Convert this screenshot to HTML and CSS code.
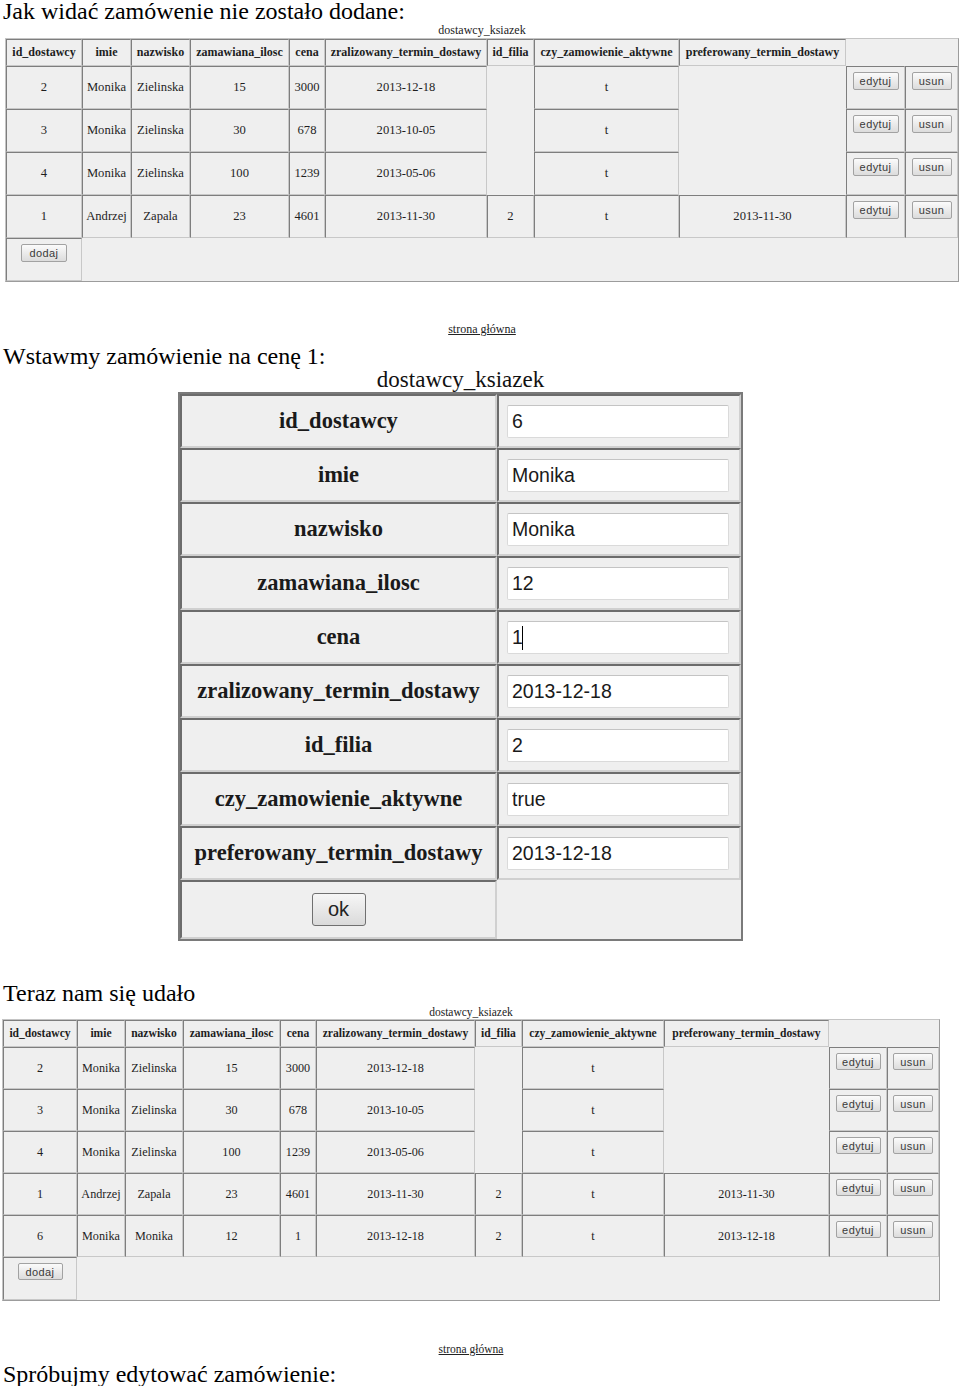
FILE: index.html
```html
<!DOCTYPE html>
<html lang="pl">
<head>
    <meta charset="UTF-8">
    <meta name="viewport" content="width=device-width, initial-scale=1.0">
    <title>dostawcy_ksiazek</title>
    <link rel="stylesheet" href="styles.css">
</head>
<body>

    <p class="doc-line">Jak widać zamówenie nie zostało dodane:</p>

    <div class="shot shot-one">
        <table class="grid grid-one">
            <caption>dostawcy_ksiazek</caption>
            <colgroup>
                <col><col><col><col><col><col><col><col><col><col><col>
            </colgroup>
            <tr class="head">
                <th>id_dostawcy</th>
                <th>imie</th>
                <th>nazwisko</th>
                <th>zamawiana_ilosc</th>
                <th>cena</th>
                <th>zralizowany_termin_dostawy</th>
                <th>id_filia</th>
                <th>czy_zamowienie_aktywne</th>
                <th>preferowany_termin_dostawy</th>
            </tr>
            <tr>
                <td>2</td><td>Monika</td><td>Zielinska</td><td>15</td><td>3000</td><td>2013-12-18</td>
                <td></td><td>t</td><td></td>
                <td class="act"><button class="btn btn-edit">edytuj</button></td>
                <td class="act"><button class="btn btn-del">usun</button></td>
            </tr>
            <tr>
                <td>3</td><td>Monika</td><td>Zielinska</td><td>30</td><td>678</td><td>2013-10-05</td>
                <td></td><td>t</td><td></td>
                <td class="act"><button class="btn btn-edit">edytuj</button></td>
                <td class="act"><button class="btn btn-del">usun</button></td>
            </tr>
            <tr>
                <td>4</td><td>Monika</td><td>Zielinska</td><td>100</td><td>1239</td><td>2013-05-06</td>
                <td></td><td>t</td><td></td>
                <td class="act"><button class="btn btn-edit">edytuj</button></td>
                <td class="act"><button class="btn btn-del">usun</button></td>
            </tr>
            <tr>
                <td>1</td><td>Andrzej</td><td>Zapala</td><td>23</td><td>4601</td><td>2013-11-30</td>
                <td>2</td><td>t</td><td>2013-11-30</td>
                <td class="act"><button class="btn btn-edit">edytuj</button></td>
                <td class="act"><button class="btn btn-del">usun</button></td>
            </tr>
            <tr class="foot">
                <td class="act"><button class="btn btn-add">dodaj</button></td>
            </tr>
        </table>
        <a class="home" href="#">strona główna</a>
    </div>

    <p class="doc-line after-link">Wstawmy zamówienie na cenę 1:</p>

    <table class="entry">
        <caption>dostawcy_ksiazek</caption>
        <tr>
            <td class="label">id_dostawcy</td>
            <td><input class="field" type="text" value="6"></td>
        </tr>
        <tr>
            <td class="label">imie</td>
            <td><input class="field" type="text" value="Monika"></td>
        </tr>
        <tr>
            <td class="label">nazwisko</td>
            <td><input class="field" type="text" value="Monika"></td>
        </tr>
        <tr>
            <td class="label">zamawiana_ilosc</td>
            <td><input class="field" type="text" value="12"></td>
        </tr>
        <tr>
            <td class="label">cena</td>
            <td>
                <div class="field-wrap">
                    <input class="field" type="text" value="1">
                    <span class="caret"></span>
                </div>
            </td>
        </tr>
        <tr>
            <td class="label">zralizowany_termin_dostawy</td>
            <td><input class="field" type="text" value="2013-12-18"></td>
        </tr>
        <tr>
            <td class="label">id_filia</td>
            <td><input class="field" type="text" value="2"></td>
        </tr>
        <tr>
            <td class="label">czy_zamowienie_aktywne</td>
            <td><input class="field" type="text" value="true"></td>
        </tr>
        <tr>
            <td class="label">preferowany_termin_dostawy</td>
            <td><input class="field" type="text" value="2013-12-18"></td>
        </tr>
        <tr class="submit-row">
            <td class="submit"><button class="ok-btn">ok</button></td>
            <td></td>
        </tr>
    </table>

    <p class="doc-line after-form">Teraz nam się udało</p>

    <div class="shot shot-two">
        <table class="grid grid-two">
            <caption>dostawcy_ksiazek</caption>
            <colgroup>
                <col><col><col><col><col><col><col><col><col><col><col>
            </colgroup>
            <tr class="head">
                <th>id_dostawcy</th>
                <th>imie</th>
                <th>nazwisko</th>
                <th>zamawiana_ilosc</th>
                <th>cena</th>
                <th>zralizowany_termin_dostawy</th>
                <th>id_filia</th>
                <th>czy_zamowienie_aktywne</th>
                <th>preferowany_termin_dostawy</th>
            </tr>
            <tr>
                <td>2</td><td>Monika</td><td>Zielinska</td><td>15</td><td>3000</td><td>2013-12-18</td>
                <td></td><td>t</td><td></td>
                <td class="act"><button class="btn btn-edit">edytuj</button></td>
                <td class="act"><button class="btn btn-del">usun</button></td>
            </tr>
            <tr>
                <td>3</td><td>Monika</td><td>Zielinska</td><td>30</td><td>678</td><td>2013-10-05</td>
                <td></td><td>t</td><td></td>
                <td class="act"><button class="btn btn-edit">edytuj</button></td>
                <td class="act"><button class="btn btn-del">usun</button></td>
            </tr>
            <tr>
                <td>4</td><td>Monika</td><td>Zielinska</td><td>100</td><td>1239</td><td>2013-05-06</td>
                <td></td><td>t</td><td></td>
                <td class="act"><button class="btn btn-edit">edytuj</button></td>
                <td class="act"><button class="btn btn-del">usun</button></td>
            </tr>
            <tr>
                <td>1</td><td>Andrzej</td><td>Zapala</td><td>23</td><td>4601</td><td>2013-11-30</td>
                <td>2</td><td>t</td><td>2013-11-30</td>
                <td class="act"><button class="btn btn-edit">edytuj</button></td>
                <td class="act"><button class="btn btn-del">usun</button></td>
            </tr>
            <tr>
                <td>6</td><td>Monika</td><td>Monika</td><td>12</td><td>1</td><td>2013-12-18</td>
                <td>2</td><td>t</td><td>2013-12-18</td>
                <td class="act"><button class="btn btn-edit">edytuj</button></td>
                <td class="act"><button class="btn btn-del">usun</button></td>
            </tr>
            <tr class="foot">
                <td class="act"><button class="btn btn-add">dodaj</button></td>
            </tr>
        </table>
        <a class="home" href="#">strona główna</a>
    </div>

    <p class="doc-line after-link-two">Spróbujmy edytować zamówienie:</p>

</body>
</html>
```

FILE: styles.css
```css
* {
    box-sizing: border-box;
}

body {
    margin: 0;
    background: #fff;
    color: #000;
    font-family: "Liberation Serif", "Times New Roman", serif;
}

/* document text between screenshots */
.doc-line {
    margin: 0;
    padding-left: 3px;
    font-size: 24px;
    line-height: 23px;
}

.after-link {
    margin-top: 9px;
}

.after-form {
    margin-top: 41px;
}

.after-link-two {
    margin-top: 7px;
}

/* list screenshots */
.shot-one {
    margin-left: 5px;
    width: 954px;
}

.shot-two {
    margin-left: 2px;
    width: 938px;
}

.home {
    display: block;
    margin-top: 40px;
    text-align: center;
    font-size: 12px;
    line-height: 14px;
    color: #222;
    text-decoration: underline;
}

.shot-two .home {
    margin-top: 41px;
    font-size: 11.5px;
}

.grid {
    border-collapse: separate;
    border-spacing: 0;
    empty-cells: hide;
    table-layout: fixed;
    background: #efefef;
    border: 1px solid;
    border-color: #c4c4c4 #9c9c9c #9c9c9c #c4c4c4;
    font-size: 12.6px;
    color: #1e1e1e;
}

.grid caption {
    font-size: 12px;
    line-height: 15px;
    color: #222;
}

.grid th,
.grid td {
    padding: 0 1px;
    border: 1px solid;
    border-color: #7e7e7e #c8c8c8 #c8c8c8 #7e7e7e;
    text-align: center;
    vertical-align: middle;
    white-space: nowrap;
    overflow: hidden;
}

.grid th {
    font-size: 12px;
    font-weight: bold;
}

.grid .act {
    vertical-align: top;
    padding-top: 5px;
}

.grid-one {
    width: 954px;
}

.grid-one tr {
    height: 43px;
}

.grid-one tr.head {
    height: 27px;
}

.grid-one col:nth-child(1) { width: 76px; }
.grid-one col:nth-child(2) { width: 49px; }
.grid-one col:nth-child(3) { width: 59px; }
.grid-one col:nth-child(4) { width: 99px; }
.grid-one col:nth-child(5) { width: 36px; }
.grid-one col:nth-child(6) { width: 162px; }
.grid-one col:nth-child(7) { width: 47px; }
.grid-one col:nth-child(8) { width: 145px; }
.grid-one col:nth-child(9) { width: 167px; }
.grid-one col:nth-child(10) { width: 59px; }
.grid-one col:nth-child(11) { width: 53px; }

.grid-two {
    width: 938px;
    font-size: 12.2px;
}

.grid-two th {
    font-size: 11.6px;
}

.grid-two caption {
    font-size: 11.5px;
    line-height: 14px;
}

.grid-two tr {
    height: 42px;
}

.grid-two tr.head {
    height: 27px;
}

.grid-two tr.foot {
    height: 43px;
}

.grid-two col:nth-child(1) { width: 74px; }
.grid-two col:nth-child(2) { width: 48px; }
.grid-two col:nth-child(3) { width: 58px; }
.grid-two col:nth-child(4) { width: 97px; }
.grid-two col:nth-child(5) { width: 36px; }
.grid-two col:nth-child(6) { width: 159px; }
.grid-two col:nth-child(7) { width: 47px; }
.grid-two col:nth-child(8) { width: 142px; }
.grid-two col:nth-child(9) { width: 165px; }
.grid-two col:nth-child(10) { width: 58px; }
.grid-two col:nth-child(11) { width: 52px; }

.btn {
    height: 18px;
    padding: 0;
    font-family: "Liberation Sans", Arial, sans-serif;
    font-size: 11px;
    letter-spacing: 0.4px;
    color: #3a3a3a;
    background: linear-gradient(#fbfbfb, #dcdcdc);
    border: 1px solid #a2a2a2;
    border-radius: 2px;
}

.btn-edit,
.btn-add {
    width: 46px;
}

.btn-del {
    width: 40px;
}

.grid-two .btn {
    height: 17px;
}

.grid-two .btn-edit,
.grid-two .btn-add {
    width: 45px;
}

/* insert form screenshot */
.entry {
    margin-left: 178px;
    width: 565px;
    border-collapse: separate;
    border-spacing: 0;
    empty-cells: hide;
    table-layout: fixed;
    background: #efefef;
    border: 2px solid #7a7a7a;
}

.entry caption {
    font-size: 23px;
    line-height: 24px;
    color: #111;
}

.entry tr {
    height: 54px;
}

.entry tr.submit-row {
    height: 59px;
}

.entry td {
    padding: 0 8px;
    border: 2px solid;
    border-color: #6c6c6c #d0d0d0 #d0d0d0 #6c6c6c;
    vertical-align: middle;
}

.entry .label {
    width: 317px;
    text-align: center;
    font-weight: bold;
    font-size: 22.5px;
    color: #1a1a1a;
}

.entry .submit {
    text-align: center;
}

.field-wrap {
    position: relative;
    width: 222px;
}

.field {
    display: block;
    width: 222px;
    height: 33px;
    padding: 0 4px;
    border: 1px solid #dadada;
    border-top-color: #c4c4c4;
    border-radius: 2px;
    background: #fff;
    font-family: "Liberation Sans", Arial, sans-serif;
    font-size: 19.5px;
    color: #1a1a1a;
}

.caret {
    position: absolute;
    left: 15px;
    top: 5px;
    width: 1px;
    height: 24px;
    background: #000;
}

.ok-btn {
    width: 54px;
    height: 33px;
    padding: 0;
    font-family: "Liberation Sans", Arial, sans-serif;
    font-size: 20px;
    color: #222;
    background: linear-gradient(#f6f6f6, #dadada);
    border: 1px solid #707070;
    border-radius: 3px;
}
```
